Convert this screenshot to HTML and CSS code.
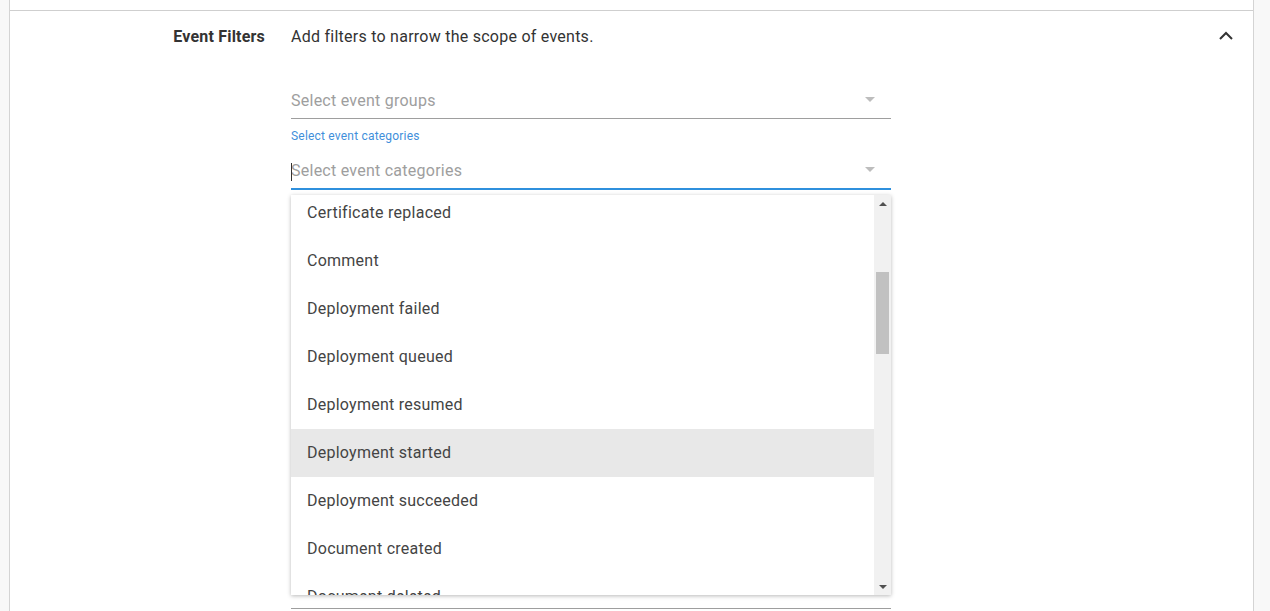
FILE: index.html
```html
<!DOCTYPE html>
<html>
<head>
<meta charset="utf-8">
<link rel="stylesheet" href="styles.css">
</head>
<body>
<div class="card">
  <div class="prev-section"></div>
  <div class="section">
    <div class="label-col">Event Filters</div>
    <div class="content-col">
      <div class="desc">Add filters to narrow the scope of events.</div>
      <div class="field first">
        <div class="input"><span class="placeholder">Select event groups</span><span class="arrow"></span></div>
      </div>
      <div class="field second">
        <div class="float-label">Select event categories</div>
        <div class="input focused"><span class="caret"></span><span class="placeholder">Select event categories</span><span class="arrow"></span>
          <div class="menu">
            <div class="list">
              <div class="item">Certificate replaced</div>
              <div class="item">Comment</div>
              <div class="item">Deployment failed</div>
              <div class="item">Deployment queued</div>
              <div class="item">Deployment resumed</div>
              <div class="item active">Deployment started</div>
              <div class="item">Deployment succeeded</div>
              <div class="item">Document created</div>
              <div class="item">Document deleted</div>
            </div>
            <div class="scrollbar">
              <div class="sb-btn"><span class="sb-up"></span></div>
              <div class="sb-track"><div class="sb-thumb"></div></div>
              <div class="sb-btn"><span class="sb-down"></span></div>
            </div>
          </div>
        </div>
      </div>
      <div class="field third">
        <div class="input"></div>
      </div>
    </div>
    <div class="toggle">
      <svg width="14" height="9" viewBox="0 0 14 9"><path d="M1 8 L7 2 L13 8" fill="none" stroke="#333" stroke-width="2"/></svg>
    </div>
  </div>
</div>
</body>
</html>
```
FILE: styles.css
```css
html, body {
  margin: 0;
  padding: 0;
  height: 100%;
  overflow: hidden;
}
body {
  background: #f8f8f8;
  font-family: Roboto, "Liberation Sans", sans-serif;
  color: #333;
}
.card {
  margin-left: 9px;
  width: 1243px;
  min-height: 100%;
  background: #fff;
  border-left: 1px solid #d4d4d4;
  border-right: 1px solid #d4d4d4;
}
.prev-section {
  height: 10px;
  border-bottom: 1px solid #cfcfcf;
}
.section {
  display: flex;
  padding-top: 16px;
}
.label-col {
  width: 255px;
  flex: none;
  text-align: right;
  font-size: 16px;
  font-weight: 700;
  letter-spacing: 0.2px;
  line-height: 20px;
  color: #333;
}
.content-col {
  width: 600px;
  margin-left: 26px;
  flex: none;
}
.desc {
  font-size: 16px;
  letter-spacing: 0.25px;
  line-height: 20px;
  color: #333;
}
.toggle {
  margin-left: auto;
  margin-right: 20px;
  padding-top: 4px;
  height: 9px;
  line-height: 0;
}
.field.first {
  margin-top: 37px;
}
.input {
  position: relative;
  height: 20px;
  padding: 7px 0 7px;
  border-bottom: 1px solid #9e9e9e;
  font-size: 16px;
  letter-spacing: 0.25px;
  line-height: 20px;
}
.placeholder {
  color: #9e9e9e;
}
.arrow {
  position: absolute;
  right: 16px;
  top: 13px;
  width: 0;
  height: 0;
  border-left: 5px solid transparent;
  border-right: 5px solid transparent;
  border-top: 5px solid #bdbdbd;
}
.field.second {
  margin-top: 9px;
}
.float-label {
  font-size: 12px;
  letter-spacing: 0.2px;
  line-height: 16px;
  color: #3f8fdb;
}
.field.second .input {
  margin-top: 10px;
}
.input.focused {
  border-bottom: 2px solid #2f90dd;
}
.caret {
  position: absolute;
  left: 0;
  top: 9px;
  width: 1px;
  height: 18px;
  background: #333;
}
.menu {
  position: absolute;
  left: 0;
  top: 41px;
  width: 600px;
  height: 400px;
  background: #fff;
  box-shadow: 0 1px 4px rgba(0, 0, 0, 0.28);
  display: flex;
  overflow: hidden;
  z-index: 10;
  letter-spacing: 0.25px;
}
.list {
  flex: 1;
  margin-top: -6px;
}
.item {
  height: 48px;
  line-height: 48px;
  padding-left: 16px;
  font-size: 16px;
  color: #444;
}
.item.active {
  background: #e8e8e8;
}
.scrollbar {
  width: 17px;
  flex: none;
  background: #f1f1f1;
  display: flex;
  flex-direction: column;
}
.sb-btn {
  height: 17px;
  display: flex;
  align-items: center;
  justify-content: center;
}
.sb-up {
  width: 0;
  height: 0;
  border-left: 4px solid transparent;
  border-right: 4px solid transparent;
  border-bottom: 4px solid #505050;
}
.sb-down {
  width: 0;
  height: 0;
  border-left: 4px solid transparent;
  border-right: 4px solid transparent;
  border-top: 4px solid #505050;
}
.sb-track {
  flex: 1;
  padding: 0 2px;
}
.sb-thumb {
  margin-top: 60px;
  height: 82px;
  background: #c1c1c1;
}
.field.third {
  margin-top: 384px;
}
.field.third .input {
  height: 20px;
}
```
